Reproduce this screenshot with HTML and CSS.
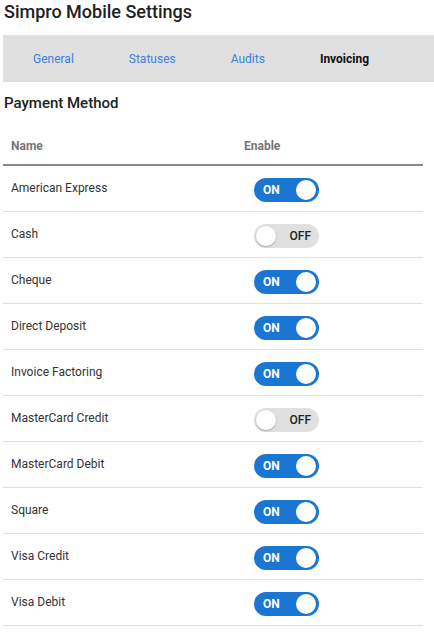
FILE: index.html
```html
<!DOCTYPE html>
<html>
<head>
<meta charset="utf-8">
<link rel="stylesheet" href="styles.css">
</head>
<body>
<h1 class="page-title">Simpro Mobile Settings</h1>
<nav class="tabs">
  <a class="tab">General</a>
  <a class="tab">Statuses</a>
  <a class="tab">Audits</a>
  <a class="tab active">Invoicing</a>
</nav>
<h2 class="section-title">Payment Method</h2>
<table class="methods">
  <thead>
    <tr><th class="col-name">Name</th><th class="col-enable">Enable</th></tr>
  </thead>
  <tbody>
    <tr><td>American Express</td><td><span class="toggle on"><span class="label">ON</span><span class="knob"></span></span></td></tr>
    <tr><td>Cash</td><td><span class="toggle off"><span class="knob"></span><span class="label">OFF</span></span></td></tr>
    <tr><td>Cheque</td><td><span class="toggle on"><span class="label">ON</span><span class="knob"></span></span></td></tr>
    <tr><td>Direct Deposit</td><td><span class="toggle on"><span class="label">ON</span><span class="knob"></span></span></td></tr>
    <tr><td>Invoice Factoring</td><td><span class="toggle on"><span class="label">ON</span><span class="knob"></span></span></td></tr>
    <tr><td>MasterCard Credit</td><td><span class="toggle off"><span class="knob"></span><span class="label">OFF</span></span></td></tr>
    <tr><td>MasterCard Debit</td><td><span class="toggle on"><span class="label">ON</span><span class="knob"></span></span></td></tr>
    <tr><td>Square</td><td><span class="toggle on"><span class="label">ON</span><span class="knob"></span></span></td></tr>
    <tr><td>Visa Credit</td><td><span class="toggle on"><span class="label">ON</span><span class="knob"></span></span></td></tr>
    <tr><td>Visa Debit</td><td><span class="toggle on"><span class="label">ON</span><span class="knob"></span></span></td></tr>
  </tbody>
</table>
</body>
</html>
```
FILE: styles.css
```css
* { box-sizing: border-box; }
html, body { margin: 0; padding: 0; background: #fff; }
body {
  font-family: Roboto, "Liberation Sans", sans-serif;
  color: #212121;
  padding: 0 11px 0 3px;
}
.page-title {
  margin: 0 0 0 1px;
  font-size: 18px;
  font-weight: 500;
  line-height: 24px;
  color: #212121;
}
.tabs {
  display: flex;
  margin: 11px -11px 0 0;
  height: 47px;
  align-items: center;
  background: #e0e0e0;
  padding-left: 2.5px;
}
.tab {
  padding: 0 27.5px;
  font-size: 12px;
  color: #3d7ee0;
  line-height: 16px;
}
.tab.active {
  color: #111;
  font-weight: 700;
}
.section-title {
  margin: 11px 0 0 1px;
  font-size: 15px;
  font-weight: 500;
  line-height: 20px;
  color: #212121;
}
.methods {
  width: 420px;
  border-collapse: collapse;
}
.methods th {
  text-align: left;
  font-size: 12px;
  font-weight: 700;
  color: #757575;
  line-height: 16px;
  padding: 25px 8px 10px;
  border-bottom: 2px solid #8a8a8a;
}
.methods th.col-name { width: 233px; }
.methods td {
  font-size: 12px;
  line-height: 16px;
  color: #333;
  height: 46px;
  padding: 0 8px;
  border-bottom: 1px solid #e0e0e0;
  vertical-align: middle;
}
.toggle {
  position: relative;
  display: flex;
  align-items: center;
  width: 65px;
  height: 24px;
  border-radius: 12px;
  margin: 3px 0 0 10px;
  font-size: 12px;
  font-weight: 700;
}
.toggle.on { background: #1976d2; color: #fff; }
.toggle.off { background: #e0e0e0; color: #212121; justify-content: space-between; }
.toggle .label { line-height: 16px; }
.toggle.on .label { padding-left: 9px; }
.toggle.off .label { padding-right: 8px; font-weight: 500; }
.knob {
  width: 20px;
  height: 20px;
  border-radius: 50%;
  background: #fff;
}
.toggle.on .knob { margin-left: auto; margin-right: 3px; }
.toggle.off .knob { margin-left: 2px; box-shadow: 0 1px 2px rgba(0,0,0,0.25); }
```
